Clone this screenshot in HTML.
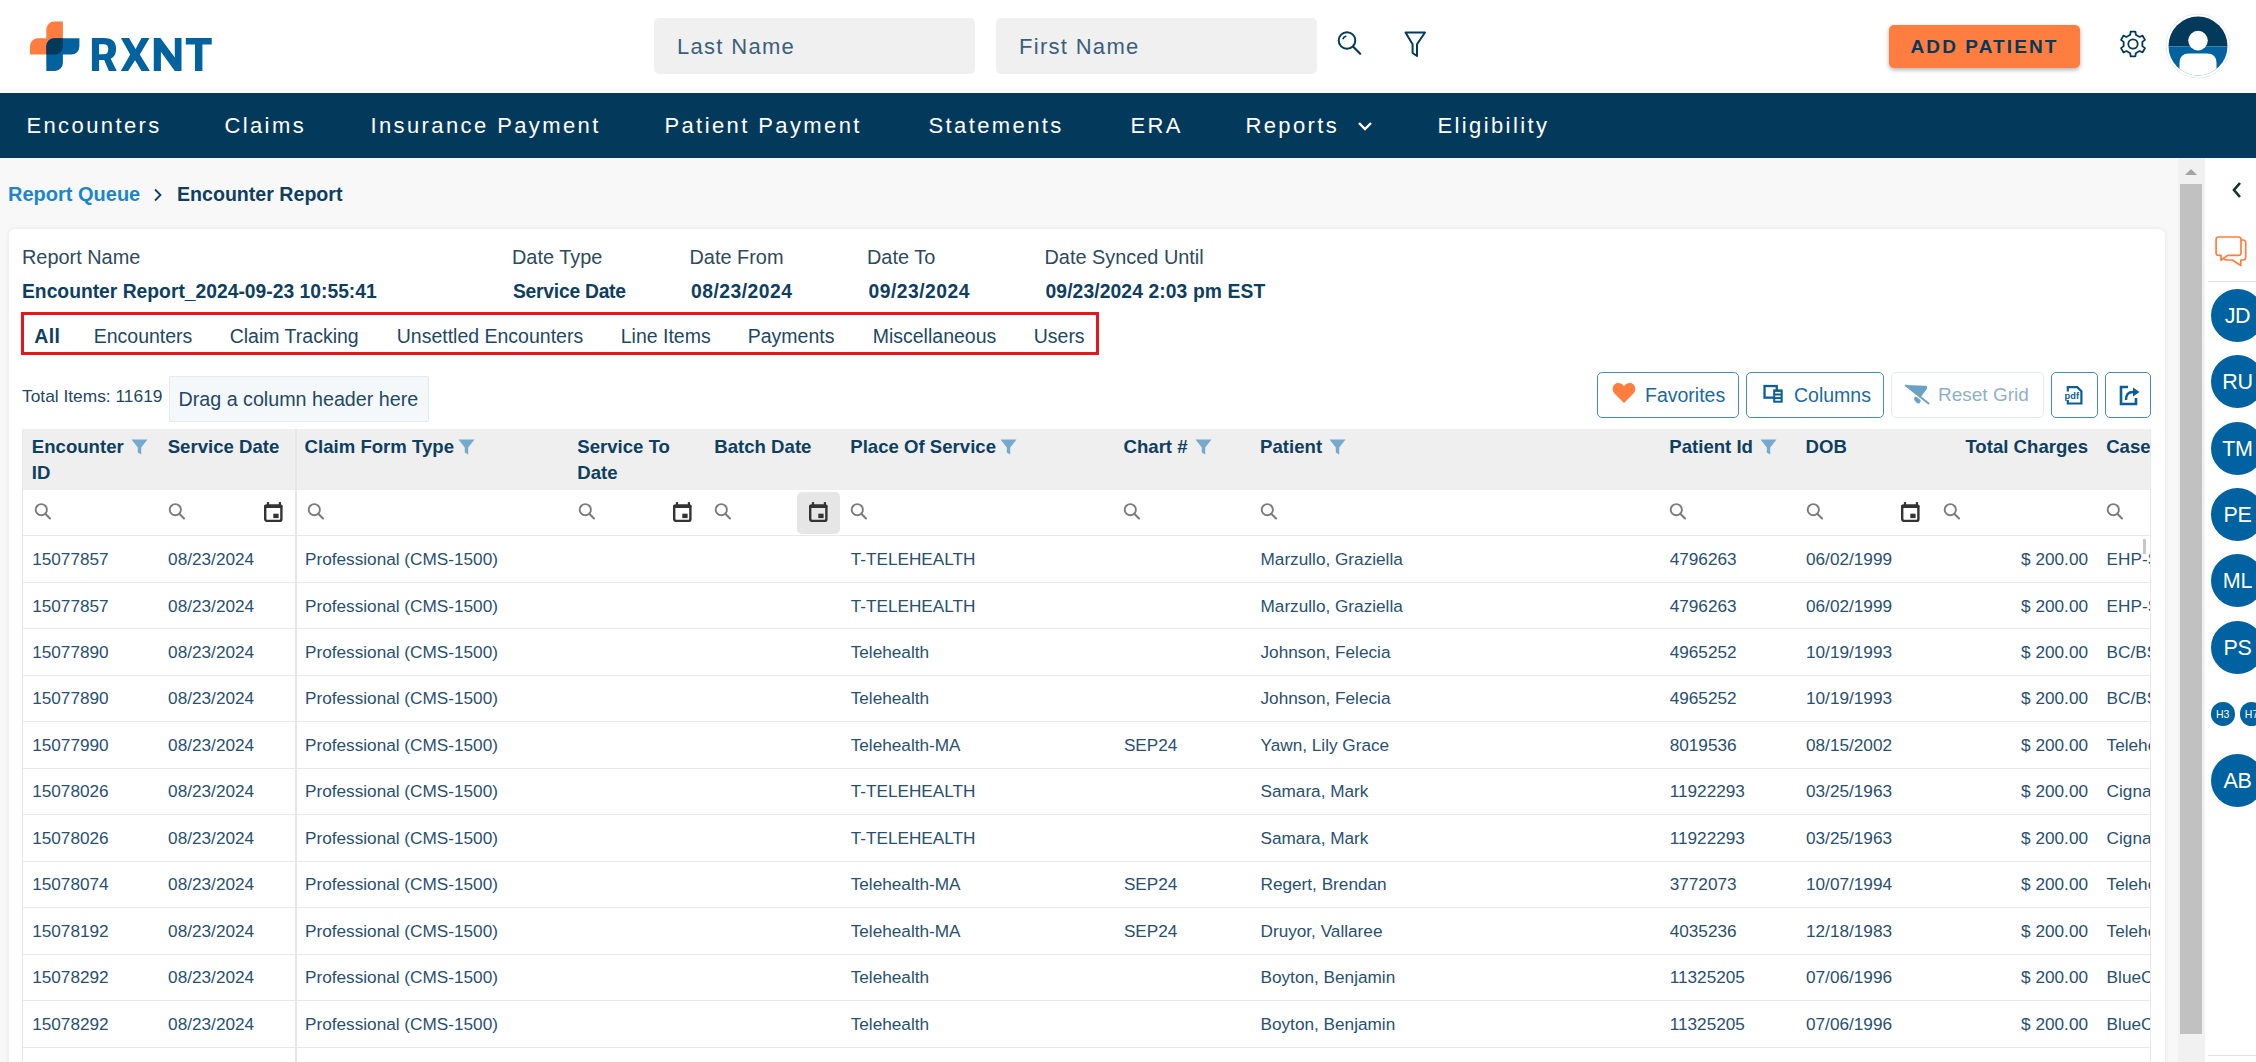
<!DOCTYPE html>
<html><head><meta charset="utf-8">
<style>
*{box-sizing:border-box;margin:0;padding:0}
html,body{width:2256px;height:1062px;overflow:hidden;background:#f8f8f8;font-family:"Liberation Sans",sans-serif;color:#0b3a5a}
.abs{position:absolute}
#hdr{position:absolute;left:0;top:0;width:2256px;height:93px;background:#fff}
#nav{position:absolute;left:0;top:93px;width:2256px;height:65px;background:#033a5c}
.nv{position:absolute;top:0;height:65px;line-height:65px;color:#fff;font-size:22px;letter-spacing:2.4px;white-space:nowrap;margin-left:-1.6px}
.inp{position:absolute;top:18px;height:56px;width:321px;background:#f0f0f0;border-radius:5px;color:#3a5f7c;font-size:22px;letter-spacing:1.3px;line-height:58px;padding-left:23px}
#addp{position:absolute;left:1889px;top:25px;width:191px;height:43px;background:#ff7d3e;border-radius:5px;box-shadow:0 2px 4px rgba(0,0,0,.3);color:#033a5c;font-size:19px;letter-spacing:2.1px;line-height:44px;text-align:center;font-weight:700;text-indent:0px}
#content{position:absolute;left:0;top:158px;width:2178px;height:904px;background:#f8f8f8}
#card{position:absolute;left:9px;top:229px;width:2156px;height:900px;background:#fff;border-radius:6px;box-shadow:0 0 5px rgba(0,0,0,.09)}
.lbl{position:absolute;font-size:19.9px;color:#2d4a5e;white-space:nowrap}
.val{position:absolute;margin-top:1px;font-size:19.3px;font-weight:700;color:#0e3e60;white-space:nowrap}
#redbox{position:absolute;left:21px;top:312px;width:1078px;height:43px;border:3px solid #e8151f}
.tab{position:absolute;top:312px;margin-left:-0.3px;height:43px;line-height:49px;font-size:19.5px;color:#1e4863;white-space:nowrap}
#sb{position:absolute;left:2178px;top:158px;width:27px;height:904px;background:#f1f1f1}
#thumb{position:absolute;left:2180px;top:184px;width:22px;height:850px;background:#c1c1c1}
#side{position:absolute;left:2205px;top:158px;width:51px;height:904px;background:#fff}
.av{position:absolute;left:2211px;width:53px;height:53px;border-radius:50%;background:#0062a0;color:#fff;font-size:21.5px;line-height:55px;text-align:center;letter-spacing:-0.3px}
.th{position:absolute;top:433.8px;font-size:18.6px;font-weight:700;line-height:26.5px;color:#0e3e60;white-space:nowrap}
.td{position:absolute;height:46.45px;line-height:46.8px;font-size:17.2px;color:#285070;white-space:nowrap}
.rl{position:absolute;left:22px;width:2129px;height:1px;background:#e9e9e9}
.btn{position:absolute;top:372px;height:46px;border:1.5px solid #4a8ab8;border-radius:5px;background:#fff}
.btxt{position:absolute;top:372px;height:46px;line-height:46px;font-size:19.5px;color:#1a6aa0;white-space:nowrap}
</style></head>
<body>
<div id="hdr">
  <!-- logo -->
  <svg class="abs" style="left:28px;top:19px" width="190" height="56" viewBox="28 19 190 56">
    <path d="M46.3 29.6 A8 8 0 0 1 54.3 21.6 L62.9 21.6 L62.9 54.5 L30 54.5 L30 46.2 A8 8 0 0 1 38 38.2 L46.3 38.2 Z" fill="#ff7d3e"/>
    <path d="M46.3 46.2 A8 8 0 0 1 54.3 38.2 L79.4 38.2 L79.4 46.5 A8 8 0 0 1 71.4 54.5 L62.9 54.5 L62.9 62.900000000000006 A8 8 0 0 1 54.9 70.9 L46.3 70.9 Z" fill="#0063a0"/>
    <path d="M46.3 46.2 A8 8 0 0 1 54.3 38.2 L62.9 38.2 L62.9 46.5 A8 8 0 0 1 54.9 54.5 L46.3 54.5 Z" fill="#033a5c"/>
    <path fill="#0063a0" fill-rule="evenodd" d="M91.9 38.1 H104 Q116.1 38.1 116.1 49.2 Q116.1 56 110.7 58.7 L116.8 71 H108.9 L104.2 59.9 H99.1 V71 H91.9 Z M99.1 44.2 V54.2 H104 Q108.3 54.2 108.3 49.2 Q108.3 44.2 104 44.2 Z M120.9 38.1 H129 L135.6 49.1 L141.5 38.1 H149.5 L139.8 54.5 L149.9 71 H141.5 L135.1 60.2 L128.1 71 H120.8 L130.2 54.5 Z M153.8 38.1 H160.4 L174.8 57.5 V38.1 H181.5 V71 H174.8 L160.9 51.8 V71 H153.8 Z M185.8 38.1 H211.7 V44.4 H202.4 V71 H195 V44.4 H185.8 Z"/>
  </svg>
  <div class="inp" style="left:654px">Last Name</div>
  <div class="inp" style="left:996px">First Name</div>
  <!-- search icon -->
  <svg class="abs" style="left:1334px;top:28px" width="32" height="32" viewBox="0 0 32 32"><circle cx="13" cy="12.5" r="8.3" fill="none" stroke="#033a5c" stroke-width="2"/><line x1="19" y1="18.5" x2="26.2" y2="25.7" stroke="#033a5c" stroke-width="2.2" stroke-linecap="round"/><path d="M8.8 11.2 Q9.6 8.6 12.3 7.9" fill="none" stroke="#033a5c" stroke-width="1.6"/></svg>
  <!-- filter icon -->
  <svg class="abs" style="left:1400px;top:28px" width="30" height="32" viewBox="0 0 30 32"><path d="M5.5 4.5 L25 4.5 L17 16.3 L17 28 L12.6 25 L12.6 16.3 Z" fill="none" stroke="#033a5c" stroke-width="2" stroke-linejoin="round"/></svg>
  <div id="addp">ADD PATIENT</div>
  <!-- gear -->
  <svg class="abs" style="left:2116px;top:26.9px" width="34" height="34" viewBox="0 0 34 34"><path fill="none" stroke="#033a5c" stroke-width="1.8" stroke-linejoin="round" d="M14.16 7.83 L14.60 4.53 L19.40 4.53 L19.84 7.83 L23.52 9.96 L26.60 8.69 L29.00 12.84 L26.36 14.87 L26.36 19.13 L29.00 21.16 L26.60 25.31 L23.52 24.04 L19.84 26.17 L19.40 29.47 L14.60 29.47 L14.16 26.17 L10.48 24.04 L7.40 25.31 L5.00 21.16 L7.64 19.13 L7.64 14.87 L5.00 12.84 L7.40 8.69 L10.48 9.96 Z"/><circle cx="17" cy="17" r="4.7" fill="none" stroke="#033a5c" stroke-width="1.8"/></svg>
  <!-- avatar -->
  <svg class="abs" style="left:2165px;top:13px" width="66" height="66" viewBox="0 0 66 66">
    <circle cx="33" cy="33" r="32" fill="#fff" stroke="#ececec" stroke-width="1"/>
    <clipPath id="avc"><circle cx="33" cy="33" r="29.5"/></clipPath>
    <g clip-path="url(#avc)">
      <rect x="0" y="0" width="66" height="33.5" fill="#033a5c"/>
      <rect x="0" y="33.5" width="66" height="33" fill="#0063a0"/>
      <circle cx="33" cy="27.6" r="9.8" fill="#fff"/>
      <path d="M14.5 66 L14.5 50 Q14.5 40.5 24 40.5 L42 40.5 Q51.5 40.5 51.5 50 L51.5 66 Z" fill="#fff"/>
    </g>
  </svg>
</div>
<div id="nav">
  <div class="nv" style="left:28px">Encounters</div>
  <div class="nv" style="left:226px">Claims</div>
  <div class="nv" style="left:372px">Insurance Payment</div>
  <div class="nv" style="left:666px">Patient Payment</div>
  <div class="nv" style="left:930px">Statements</div>
  <div class="nv" style="left:1132px">ERA</div>
  <div class="nv" style="left:1247px">Reports</div>
  <svg class="abs" style="left:1356px;top:26px" width="18" height="14" viewBox="0 0 18 14"><path d="M3 4 L9 10 L15 4" fill="none" stroke="#fff" stroke-width="2.4"/></svg>
  <div class="nv" style="left:1439px">Eligibility</div>
</div>
<div id="content"></div>
<!-- breadcrumb -->
<div class="abs" style="left:8px;top:182.5px;font-size:20px;font-weight:700;color:#1a86cc;white-space:nowrap">Report Queue</div>
<svg class="abs" style="left:150px;top:186px" width="14" height="18" viewBox="0 0 14 18"><path d="M5 3.5 L10.5 9 L5 14.5" fill="none" stroke="#0e3e60" stroke-width="1.8"/></svg>
<div class="abs" style="left:177px;top:182.5px;font-size:19.6px;font-weight:700;color:#0e3e60;white-space:nowrap">Encounter Report</div>

<div id="card"></div>
<div class="lbl" style="left:22px;top:246px">Report Name</div>
<div class="lbl" style="left:512px;top:246px">Date Type</div>
<div class="lbl" style="left:689.5px;top:246px">Date From</div>
<div class="lbl" style="left:867px;top:246px">Date To</div>
<div class="lbl" style="left:1044.5px;top:246px">Date Synced Until</div>
<div class="val" style="left:22px;top:280px">Encounter Report_2024-09-23 10:55:41</div>
<div class="val" style="left:513px;top:280px;letter-spacing:-0.25px">Service Date</div>
<div class="val" style="left:691px;top:280px;letter-spacing:0.5px">08/23/2024</div>
<div class="val" style="left:868.5px;top:280px;letter-spacing:0.5px">09/23/2024</div>
<div class="val" style="left:1045.5px;top:280px;letter-spacing:0.1px">09/23/2024 2:03 pm EST</div>

<div id="redbox"></div>
<div class="tab" style="left:34.5px;font-weight:700;color:#0e3e60;letter-spacing:0.4px">All</div>
<div class="tab" style="left:94px">Encounters</div>
<div class="tab" style="left:230px">Claim Tracking</div>
<div class="tab" style="left:397px">Unsettled Encounters</div>
<div class="tab" style="left:621px">Line Items</div>
<div class="tab" style="left:748px">Payments</div>
<div class="tab" style="left:873px">Miscellaneous</div>
<div class="tab" style="left:1034px">Users</div>


<div class="abs" style="left:22px;top:386px;font-size:17.35px;color:#1f4863;white-space:nowrap">Total Items: 11619</div>
<div class="abs" style="left:169px;top:376px;width:260px;height:46px;background:#f5f8fb;border:1px solid #e3eaf0;border-radius:2px;font-size:19.7px;line-height:45px;padding-left:8.5px;color:#1f4863;white-space:nowrap">Drag a column header here</div>
<div class="btn" style="left:1597px;width:142px"></div>
<svg class="abs" style="left:1612px;top:382px" width="24" height="22" viewBox="0 0 24 22"><path d="M12 21 L3 12 Q0 9 0.8 5.5 Q2 1.2 6.3 1 Q9.8 1 12 4.2 Q14.2 1 17.7 1 Q22 1.2 23.2 5.5 Q24 9 21 12 Z" fill="#ff7d3e"/></svg>
<div class="btxt" style="left:1645px">Favorites</div>
<div class="btn" style="left:1746px;width:138px"></div>
<svg class="abs" style="left:1760px;top:382px" width="26" height="24" viewBox="1760 382 26 24"><rect x="1764.55" y="386.05" width="12.2" height="11.6" fill="none" stroke="#0b5e96" stroke-width="2.3"/><rect x="1773.2" y="389.4" width="9.5" height="13.3" fill="#0b5e96"/><rect x="1775.2" y="391.9" width="5.4" height="1.6" fill="#fff"/><rect x="1775.2" y="395.5" width="5.4" height="1.6" fill="#fff"/><rect x="1775.2" y="399.1" width="5.4" height="1.6" fill="#fff"/></svg>
<div class="btxt" style="left:1794px">Columns</div>
<div class="btn" style="left:1891px;width:153px;border-color:#e2ebf1"></div>
<svg class="abs" style="left:1900px;top:378px" width="40" height="32" viewBox="1900 378 40 32"><path d="M1905.2 385 L1925.3 385.8 Q1928 386.2 1926.8 389 L1921 396.8 Z" fill="#6aa1c6"/><ellipse cx="1917.4" cy="399.8" rx="2.7" ry="3.8" transform="rotate(-35 1917.4 399.8)" fill="#6aa1c6"/><line x1="1911" y1="391.8" x2="1921.5" y2="399.9" stroke="#fff" stroke-width="1.3"/><line x1="1905.8" y1="385.6" x2="1928.6" y2="403.5" stroke="#6aa1c6" stroke-width="1.9" stroke-linecap="round"/></svg>
<div class="btxt" style="left:1938px;color:#8fb1c8;font-size:19px">Reset Grid</div>
<div class="btn" style="left:2051px;width:47px"></div>
<svg class="abs" style="left:2063px;top:385px" width="22" height="21" viewBox="0 0 22 21"><path d="M4.8 6.5 V2.1 H14.2 L18.4 6.3 V18.5 H4.8 V15" fill="none" stroke="#0b5e96" stroke-width="2.2"/><text x="1.6" y="13.8" font-family="Liberation Sans" font-weight="700" font-size="8.8" fill="#0b5e96" textLength="14.4" lengthAdjust="spacingAndGlyphs">pdf</text></svg>
<div class="btn" style="left:2105px;width:46px"></div>
<svg class="abs" style="left:2118px;top:385px" width="23" height="21" viewBox="0 0 23 21"><path d="M10 2 L3 2 L3 19 L18 19 L18 13" fill="none" stroke="#0b5e96" stroke-width="2.6"/><path d="M8 15 Q8 7 15 7 L16 7" fill="none" stroke="#0b5e96" stroke-width="2.4"/><path d="M15 2.5 L21.5 7 L15 11.5 Z" fill="#0b5e96"/></svg>

<!--TABLE_START-->
<div id="tclip" style="position:absolute;left:0;top:0;width:2151px;height:1062px;overflow:hidden">
<div class="abs" style="left:22px;top:429px;width:2129px;height:60.5px;background:#efefef"></div>
<div class="abs" style="left:22px;top:489.5px;width:2129px;height:46.5px;background:#fff;border-bottom:1.5px solid #e9e9e9"></div>
<div class="abs" style="left:797px;top:492px;width:43px;height:42px;background:#e6e6e6;border-radius:5px"></div>
<div class="th" style="left:31.8px">Encounter<br>ID</div>
<div class="abs" style="left:33.0px;top:502.5px"><svg width="20" height="20" viewBox="0 0 20 20"><circle cx="8.3" cy="6.7" r="5.6" fill="none" stroke="#7c7c7c" stroke-width="1.9"/><line x1="12.3" y1="10.7" x2="17" y2="15.4" stroke="#7c7c7c" stroke-width="2.1" stroke-linecap="round"/></svg></div>
<div class="th" style="left:167.7px">Service Date</div>
<div class="abs" style="left:166.7px;top:502.5px"><svg width="20" height="20" viewBox="0 0 20 20"><circle cx="8.3" cy="6.7" r="5.6" fill="none" stroke="#7c7c7c" stroke-width="1.9"/><line x1="12.3" y1="10.7" x2="17" y2="15.4" stroke="#7c7c7c" stroke-width="2.1" stroke-linecap="round"/></svg></div>
<div class="abs" style="left:262.7px;top:501.5px"><svg width="21" height="21" viewBox="0 0 21 21"><rect x="3.9" y="0.1" width="2.2" height="3" fill="#333"/><rect x="15.8" y="0.1" width="2.2" height="3" fill="#333"/><rect x="2.2" y="3.6" width="16.2" height="15.3" rx="2" fill="none" stroke="#333" stroke-width="2.4"/><rect x="1" y="2.4" width="18.6" height="3.6" rx="1.5" fill="#333"/><rect x="10.3" y="11.7" width="5.3" height="4.4" fill="#333"/></svg></div>
<div class="th" style="left:304.6px">Claim Form Type</div>
<div class="abs" style="left:306.2px;top:502.5px"><svg width="20" height="20" viewBox="0 0 20 20"><circle cx="8.3" cy="6.7" r="5.6" fill="none" stroke="#7c7c7c" stroke-width="1.9"/><line x1="12.3" y1="10.7" x2="17" y2="15.4" stroke="#7c7c7c" stroke-width="2.1" stroke-linecap="round"/></svg></div>
<div class="th" style="left:577.3px">Service To<br>Date</div>
<div class="abs" style="left:576.6px;top:502.5px"><svg width="20" height="20" viewBox="0 0 20 20"><circle cx="8.3" cy="6.7" r="5.6" fill="none" stroke="#7c7c7c" stroke-width="1.9"/><line x1="12.3" y1="10.7" x2="17" y2="15.4" stroke="#7c7c7c" stroke-width="2.1" stroke-linecap="round"/></svg></div>
<div class="abs" style="left:671.7px;top:501.5px"><svg width="21" height="21" viewBox="0 0 21 21"><rect x="3.9" y="0.1" width="2.2" height="3" fill="#333"/><rect x="15.8" y="0.1" width="2.2" height="3" fill="#333"/><rect x="2.2" y="3.6" width="16.2" height="15.3" rx="2" fill="none" stroke="#333" stroke-width="2.4"/><rect x="1" y="2.4" width="18.6" height="3.6" rx="1.5" fill="#333"/><rect x="10.3" y="11.7" width="5.3" height="4.4" fill="#333"/></svg></div>
<div class="th" style="left:714.3px">Batch Date</div>
<div class="abs" style="left:712.9px;top:502.5px"><svg width="20" height="20" viewBox="0 0 20 20"><circle cx="8.3" cy="6.7" r="5.6" fill="none" stroke="#7c7c7c" stroke-width="1.9"/><line x1="12.3" y1="10.7" x2="17" y2="15.4" stroke="#7c7c7c" stroke-width="2.1" stroke-linecap="round"/></svg></div>
<div class="abs" style="left:807.7px;top:501.5px"><svg width="21" height="21" viewBox="0 0 21 21"><rect x="3.9" y="0.1" width="2.2" height="3" fill="#333"/><rect x="15.8" y="0.1" width="2.2" height="3" fill="#333"/><rect x="2.2" y="3.6" width="16.2" height="15.3" rx="2" fill="none" stroke="#333" stroke-width="2.4"/><rect x="1" y="2.4" width="18.6" height="3.6" rx="1.5" fill="#333"/><rect x="10.3" y="11.7" width="5.3" height="4.4" fill="#333"/></svg></div>
<div class="th" style="left:850.3px">Place Of Service</div>
<div class="abs" style="left:849.3px;top:502.5px"><svg width="20" height="20" viewBox="0 0 20 20"><circle cx="8.3" cy="6.7" r="5.6" fill="none" stroke="#7c7c7c" stroke-width="1.9"/><line x1="12.3" y1="10.7" x2="17" y2="15.4" stroke="#7c7c7c" stroke-width="2.1" stroke-linecap="round"/></svg></div>
<div class="th" style="left:1123.5px">Chart #</div>
<div class="abs" style="left:1122.4px;top:502.5px"><svg width="20" height="20" viewBox="0 0 20 20"><circle cx="8.3" cy="6.7" r="5.6" fill="none" stroke="#7c7c7c" stroke-width="1.9"/><line x1="12.3" y1="10.7" x2="17" y2="15.4" stroke="#7c7c7c" stroke-width="2.1" stroke-linecap="round"/></svg></div>
<div class="th" style="left:1260.1px">Patient</div>
<div class="abs" style="left:1258.8px;top:502.5px"><svg width="20" height="20" viewBox="0 0 20 20"><circle cx="8.3" cy="6.7" r="5.6" fill="none" stroke="#7c7c7c" stroke-width="1.9"/><line x1="12.3" y1="10.7" x2="17" y2="15.4" stroke="#7c7c7c" stroke-width="2.1" stroke-linecap="round"/></svg></div>
<div class="th" style="left:1669.3px">Patient Id</div>
<div class="abs" style="left:1668.3px;top:502.5px"><svg width="20" height="20" viewBox="0 0 20 20"><circle cx="8.3" cy="6.7" r="5.6" fill="none" stroke="#7c7c7c" stroke-width="1.9"/><line x1="12.3" y1="10.7" x2="17" y2="15.4" stroke="#7c7c7c" stroke-width="2.1" stroke-linecap="round"/></svg></div>
<div class="th" style="left:1805.6px">DOB</div>
<div class="abs" style="left:1804.7px;top:502.5px"><svg width="20" height="20" viewBox="0 0 20 20"><circle cx="8.3" cy="6.7" r="5.6" fill="none" stroke="#7c7c7c" stroke-width="1.9"/><line x1="12.3" y1="10.7" x2="17" y2="15.4" stroke="#7c7c7c" stroke-width="2.1" stroke-linecap="round"/></svg></div>
<div class="abs" style="left:1899.7px;top:501.5px"><svg width="21" height="21" viewBox="0 0 21 21"><rect x="3.9" y="0.1" width="2.2" height="3" fill="#333"/><rect x="15.8" y="0.1" width="2.2" height="3" fill="#333"/><rect x="2.2" y="3.6" width="16.2" height="15.3" rx="2" fill="none" stroke="#333" stroke-width="2.4"/><rect x="1" y="2.4" width="18.6" height="3.6" rx="1.5" fill="#333"/><rect x="10.3" y="11.7" width="5.3" height="4.4" fill="#333"/></svg></div>
<div class="th" style="left:1933px;width:155px;text-align:right">Total Charges</div>
<div class="abs" style="left:1941.6px;top:502.5px"><svg width="20" height="20" viewBox="0 0 20 20"><circle cx="8.3" cy="6.7" r="5.6" fill="none" stroke="#7c7c7c" stroke-width="1.9"/><line x1="12.3" y1="10.7" x2="17" y2="15.4" stroke="#7c7c7c" stroke-width="2.1" stroke-linecap="round"/></svg></div>
<div class="th" style="left:2106.2px">Case</div>
<div class="abs" style="left:2104.5px;top:502.5px"><svg width="20" height="20" viewBox="0 0 20 20"><circle cx="8.3" cy="6.7" r="5.6" fill="none" stroke="#7c7c7c" stroke-width="1.9"/><line x1="12.3" y1="10.7" x2="17" y2="15.4" stroke="#7c7c7c" stroke-width="2.1" stroke-linecap="round"/></svg></div>
<svg class="abs" style="left:131px;top:439px" width="17" height="16" viewBox="0 0 17 16"><path d="M0.5 0.5 L16.5 0.5 L10.2 8.5 L10.2 15.5 L6.8 13.5 L6.8 8.5 Z" fill="#76aacd"/></svg>
<svg class="abs" style="left:458px;top:439px" width="17" height="16" viewBox="0 0 17 16"><path d="M0.5 0.5 L16.5 0.5 L10.2 8.5 L10.2 15.5 L6.8 13.5 L6.8 8.5 Z" fill="#76aacd"/></svg>
<svg class="abs" style="left:1000px;top:439px" width="17" height="16" viewBox="0 0 17 16"><path d="M0.5 0.5 L16.5 0.5 L10.2 8.5 L10.2 15.5 L6.8 13.5 L6.8 8.5 Z" fill="#76aacd"/></svg>
<svg class="abs" style="left:1195px;top:439px" width="17" height="16" viewBox="0 0 17 16"><path d="M0.5 0.5 L16.5 0.5 L10.2 8.5 L10.2 15.5 L6.8 13.5 L6.8 8.5 Z" fill="#76aacd"/></svg>
<svg class="abs" style="left:1329px;top:439px" width="17" height="16" viewBox="0 0 17 16"><path d="M0.5 0.5 L16.5 0.5 L10.2 8.5 L10.2 15.5 L6.8 13.5 L6.8 8.5 Z" fill="#76aacd"/></svg>
<svg class="abs" style="left:1760px;top:439px" width="17" height="16" viewBox="0 0 17 16"><path d="M0.5 0.5 L16.5 0.5 L10.2 8.5 L10.2 15.5 L6.8 13.5 L6.8 8.5 Z" fill="#76aacd"/></svg>
<div class="rl" style="top:582.0px"></div>
<div class="td" style="left:32.2px;top:536.0px">15077857</div>
<div class="td" style="left:168.1px;top:536.0px">08/23/2024</div>
<div class="td" style="left:305.0px;top:536.0px">Professional (CMS-1500)</div>
<div class="td" style="left:850.7px;top:536.0px">T-TELEHEALTH</div>
<div class="td" style="left:1260.5px;top:536.0px">Marzullo, Graziella</div>
<div class="td" style="left:1669.7px;top:536.0px">4796263</div>
<div class="td" style="left:1806.0px;top:536.0px">06/02/1999</div>
<div class="td" style="left:1933px;width:155px;top:536.0px;text-align:right">$ 200.00</div>
<div class="td" style="left:2106.6px;top:536.0px">EHP-SOMOS</div>
<div class="rl" style="top:628.4px"></div>
<div class="td" style="left:32.2px;top:582.5px">15077857</div>
<div class="td" style="left:168.1px;top:582.5px">08/23/2024</div>
<div class="td" style="left:305.0px;top:582.5px">Professional (CMS-1500)</div>
<div class="td" style="left:850.7px;top:582.5px">T-TELEHEALTH</div>
<div class="td" style="left:1260.5px;top:582.5px">Marzullo, Graziella</div>
<div class="td" style="left:1669.7px;top:582.5px">4796263</div>
<div class="td" style="left:1806.0px;top:582.5px">06/02/1999</div>
<div class="td" style="left:1933px;width:155px;top:582.5px;text-align:right">$ 200.00</div>
<div class="td" style="left:2106.6px;top:582.5px">EHP-SOMOS</div>
<div class="rl" style="top:674.9px"></div>
<div class="td" style="left:32.2px;top:628.9px">15077890</div>
<div class="td" style="left:168.1px;top:628.9px">08/23/2024</div>
<div class="td" style="left:305.0px;top:628.9px">Professional (CMS-1500)</div>
<div class="td" style="left:850.7px;top:628.9px">Telehealth</div>
<div class="td" style="left:1260.5px;top:628.9px">Johnson, Felecia</div>
<div class="td" style="left:1669.7px;top:628.9px">4965252</div>
<div class="td" style="left:1806.0px;top:628.9px">10/19/1993</div>
<div class="td" style="left:1933px;width:155px;top:628.9px;text-align:right">$ 200.00</div>
<div class="td" style="left:2106.6px;top:628.9px">BC/BS</div>
<div class="rl" style="top:721.3px"></div>
<div class="td" style="left:32.2px;top:675.4px">15077890</div>
<div class="td" style="left:168.1px;top:675.4px">08/23/2024</div>
<div class="td" style="left:305.0px;top:675.4px">Professional (CMS-1500)</div>
<div class="td" style="left:850.7px;top:675.4px">Telehealth</div>
<div class="td" style="left:1260.5px;top:675.4px">Johnson, Felecia</div>
<div class="td" style="left:1669.7px;top:675.4px">4965252</div>
<div class="td" style="left:1806.0px;top:675.4px">10/19/1993</div>
<div class="td" style="left:1933px;width:155px;top:675.4px;text-align:right">$ 200.00</div>
<div class="td" style="left:2106.6px;top:675.4px">BC/BS</div>
<div class="rl" style="top:767.8px"></div>
<div class="td" style="left:32.2px;top:721.8px">15077990</div>
<div class="td" style="left:168.1px;top:721.8px">08/23/2024</div>
<div class="td" style="left:305.0px;top:721.8px">Professional (CMS-1500)</div>
<div class="td" style="left:850.7px;top:721.8px">Telehealth-MA</div>
<div class="td" style="left:1123.9px;top:721.8px">SEP24</div>
<div class="td" style="left:1260.5px;top:721.8px">Yawn, Lily Grace</div>
<div class="td" style="left:1669.7px;top:721.8px">8019536</div>
<div class="td" style="left:1806.0px;top:721.8px">08/15/2002</div>
<div class="td" style="left:1933px;width:155px;top:721.8px;text-align:right">$ 200.00</div>
<div class="td" style="left:2106.6px;top:721.8px">Telehealth</div>
<div class="rl" style="top:814.2px"></div>
<div class="td" style="left:32.2px;top:768.2px">15078026</div>
<div class="td" style="left:168.1px;top:768.2px">08/23/2024</div>
<div class="td" style="left:305.0px;top:768.2px">Professional (CMS-1500)</div>
<div class="td" style="left:850.7px;top:768.2px">T-TELEHEALTH</div>
<div class="td" style="left:1260.5px;top:768.2px">Samara, Mark</div>
<div class="td" style="left:1669.7px;top:768.2px">11922293</div>
<div class="td" style="left:1806.0px;top:768.2px">03/25/1963</div>
<div class="td" style="left:1933px;width:155px;top:768.2px;text-align:right">$ 200.00</div>
<div class="td" style="left:2106.6px;top:768.2px">Cigna</div>
<div class="rl" style="top:860.7px"></div>
<div class="td" style="left:32.2px;top:814.7px">15078026</div>
<div class="td" style="left:168.1px;top:814.7px">08/23/2024</div>
<div class="td" style="left:305.0px;top:814.7px">Professional (CMS-1500)</div>
<div class="td" style="left:850.7px;top:814.7px">T-TELEHEALTH</div>
<div class="td" style="left:1260.5px;top:814.7px">Samara, Mark</div>
<div class="td" style="left:1669.7px;top:814.7px">11922293</div>
<div class="td" style="left:1806.0px;top:814.7px">03/25/1963</div>
<div class="td" style="left:1933px;width:155px;top:814.7px;text-align:right">$ 200.00</div>
<div class="td" style="left:2106.6px;top:814.7px">Cigna</div>
<div class="rl" style="top:907.1px"></div>
<div class="td" style="left:32.2px;top:861.2px">15078074</div>
<div class="td" style="left:168.1px;top:861.2px">08/23/2024</div>
<div class="td" style="left:305.0px;top:861.2px">Professional (CMS-1500)</div>
<div class="td" style="left:850.7px;top:861.2px">Telehealth-MA</div>
<div class="td" style="left:1123.9px;top:861.2px">SEP24</div>
<div class="td" style="left:1260.5px;top:861.2px">Regert, Brendan</div>
<div class="td" style="left:1669.7px;top:861.2px">3772073</div>
<div class="td" style="left:1806.0px;top:861.2px">10/07/1994</div>
<div class="td" style="left:1933px;width:155px;top:861.2px;text-align:right">$ 200.00</div>
<div class="td" style="left:2106.6px;top:861.2px">Telehealth</div>
<div class="rl" style="top:953.6px"></div>
<div class="td" style="left:32.2px;top:907.6px">15078192</div>
<div class="td" style="left:168.1px;top:907.6px">08/23/2024</div>
<div class="td" style="left:305.0px;top:907.6px">Professional (CMS-1500)</div>
<div class="td" style="left:850.7px;top:907.6px">Telehealth-MA</div>
<div class="td" style="left:1123.9px;top:907.6px">SEP24</div>
<div class="td" style="left:1260.5px;top:907.6px">Druyor, Vallaree</div>
<div class="td" style="left:1669.7px;top:907.6px">4035236</div>
<div class="td" style="left:1806.0px;top:907.6px">12/18/1983</div>
<div class="td" style="left:1933px;width:155px;top:907.6px;text-align:right">$ 200.00</div>
<div class="td" style="left:2106.6px;top:907.6px">Telehealth</div>
<div class="rl" style="top:1000.0px"></div>
<div class="td" style="left:32.2px;top:954.0px">15078292</div>
<div class="td" style="left:168.1px;top:954.0px">08/23/2024</div>
<div class="td" style="left:305.0px;top:954.0px">Professional (CMS-1500)</div>
<div class="td" style="left:850.7px;top:954.0px">Telehealth</div>
<div class="td" style="left:1260.5px;top:954.0px">Boyton, Benjamin</div>
<div class="td" style="left:1669.7px;top:954.0px">11325205</div>
<div class="td" style="left:1806.0px;top:954.0px">07/06/1996</div>
<div class="td" style="left:1933px;width:155px;top:954.0px;text-align:right">$ 200.00</div>
<div class="td" style="left:2106.6px;top:954.0px">BlueCross</div>
<div class="rl" style="top:1046.5px"></div>
<div class="td" style="left:32.2px;top:1000.5px">15078292</div>
<div class="td" style="left:168.1px;top:1000.5px">08/23/2024</div>
<div class="td" style="left:305.0px;top:1000.5px">Professional (CMS-1500)</div>
<div class="td" style="left:850.7px;top:1000.5px">Telehealth</div>
<div class="td" style="left:1260.5px;top:1000.5px">Boyton, Benjamin</div>
<div class="td" style="left:1669.7px;top:1000.5px">11325205</div>
<div class="td" style="left:1806.0px;top:1000.5px">07/06/1996</div>
<div class="td" style="left:1933px;width:155px;top:1000.5px;text-align:right">$ 200.00</div>
<div class="td" style="left:2106.6px;top:1000.5px">BlueCross</div>
<div class="rl" style="top:1092.9px"></div>
<div class="td" style="left:32.2px;top:1047.0px">15078300</div>
<div class="td" style="left:168.1px;top:1047.0px">08/23/2024</div>
<div class="td" style="left:305.0px;top:1047.0px">Professional (CMS-1500)</div>
<div class="td" style="left:850.7px;top:1047.0px">Telehealth</div>
<div class="td" style="left:1260.5px;top:1047.0px">Boyton, Benjamin</div>
<div class="td" style="left:1669.7px;top:1047.0px">11325205</div>
<div class="td" style="left:1806.0px;top:1047.0px">07/06/1996</div>
<div class="td" style="left:1933px;width:155px;top:1047.0px;text-align:right">$ 200.00</div>
<div class="td" style="left:2106.6px;top:1047.0px">BlueCross</div>
<div class="abs" style="left:295px;top:429px;width:2px;height:640px;background:#e6e6e6"></div>
<div class="abs" style="left:22px;top:429px;width:1px;height:640px;background:#e8e8e8"></div>
<div class="abs" style="left:2142.5px;top:538.5px;width:3.5px;height:15px;background:#c8c8c8"></div>
</div>
<div class="abs" style="left:2150px;top:429px;width:1px;height:640px;background:#e8e8e8"></div>
<!--TABLE_END-->

<div id="sb"></div>
<div id="thumb"></div>
<div id="side"></div>
<svg class="abs" style="left:2183px;top:165px" width="16" height="12" viewBox="0 0 16 12"><path d="M2 10 L8 4 L14 10 Z" fill="#a3a3a3"/></svg>
<svg class="abs" style="left:2228px;top:180px" width="18" height="20" viewBox="0 0 18 20"><path d="M12 3 L6 10 L12 17" fill="none" stroke="#0c3323" stroke-width="2.6"/></svg>
<svg class="abs" style="left:2205px;top:225px" width="51" height="50" viewBox="2205 225 51 50"><path d="M2218.6 237 H2238.5 Q2241 237 2241 239.5 V252.9 Q2241 255.4 2238.5 255.4 H2227.6 L2221 260.3 V255.4 H2218.6 Q2216.1 255.4 2216.1 252.9 V239.5 Q2216.1 237 2218.6 237 Z" fill="none" stroke="#ff7d3e" stroke-width="1.7" stroke-linejoin="round"/><path d="M2241 240 H2243 Q2245.7 240 2245.7 242.7 V257.3 Q2245.7 260 2243 260 H2240.8 V265.5 L2232.3 260 H2227 Q2225 260 2223.8 258.6" fill="none" stroke="#ff7d3e" stroke-width="1.7" stroke-linejoin="round"/></svg>
<div class="abs" style="left:2208px;top:281px;width:48px;height:1px;background:#e3e3e3"></div>
<div class="av" style="top:289px">JD</div>
<div class="av" style="top:355px">RU</div>
<div class="av" style="top:422px">TM</div>
<div class="av" style="top:488px">PE</div>
<div class="av" style="top:554px">ML</div>
<div class="av" style="top:621px">PS</div>
<div class="av" style="top:702px;left:2211px;width:23.5px;height:23.5px;line-height:24px;font-size:10.5px;font-weight:400;letter-spacing:0">H3</div>
<div class="av" style="top:702px;left:2239.8px;width:23.5px;height:23.5px;line-height:24px;font-size:10.5px;font-weight:400;letter-spacing:0">H7</div>
<div class="av" style="top:754px">AB</div>
<div class="abs" style="left:2208px;top:1055px;width:48px;height:1px;background:#e3e3e3"></div>

</body></html>
